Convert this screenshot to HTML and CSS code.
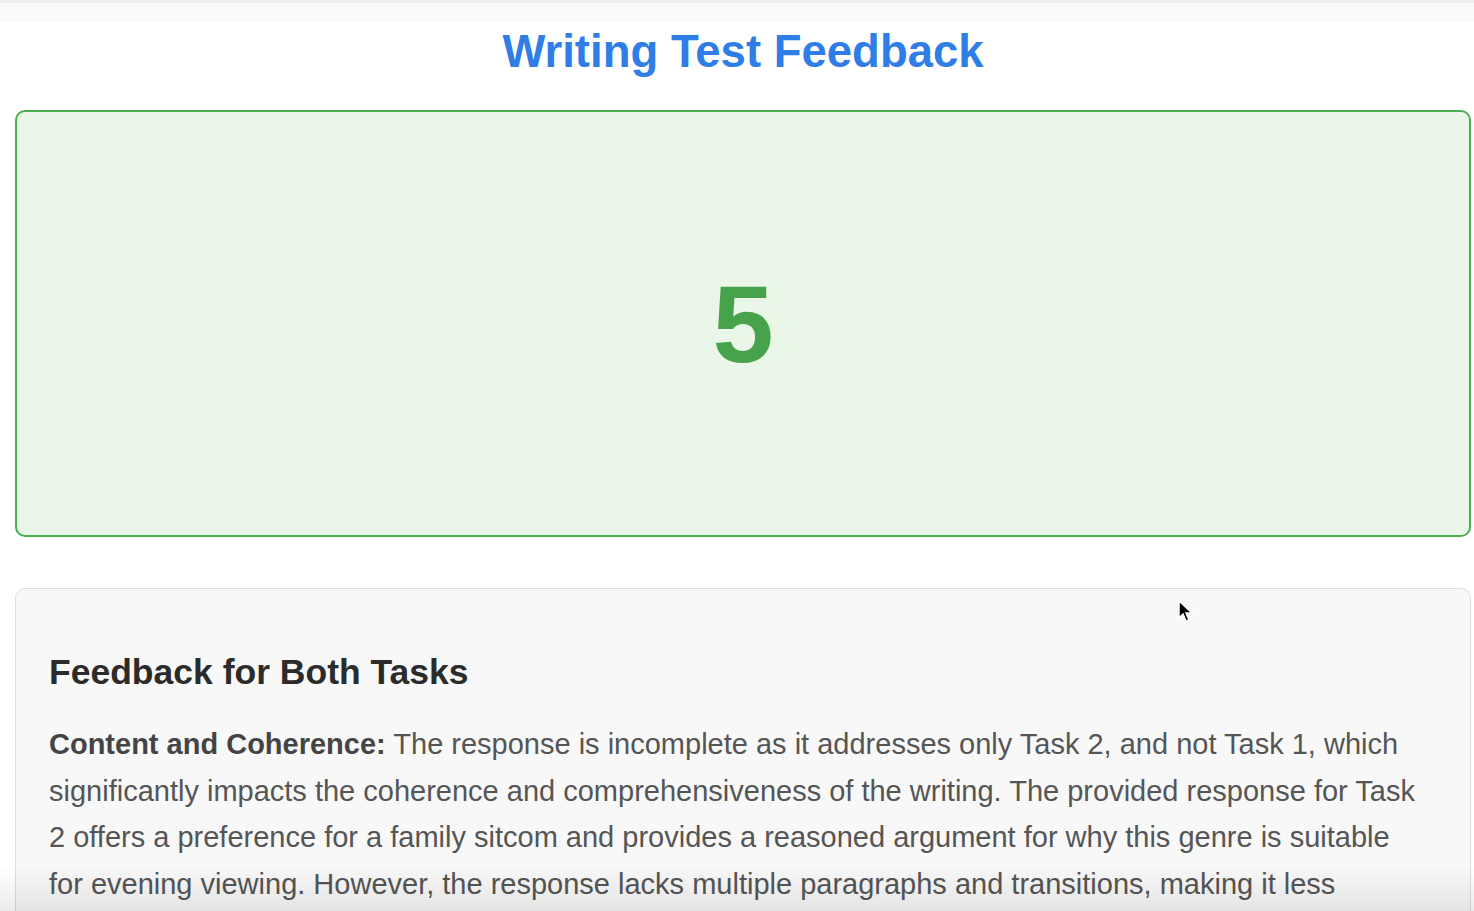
FILE: index.html
```html
<!DOCTYPE html>
<html lang="en">
<head>
    <meta charset="UTF-8">
    <meta name="viewport" content="width=device-width, initial-scale=1.0">
    <title>Writing Test Feedback</title>
    <link rel="stylesheet" href="styles.css">
</head>
<body>
    <div class="topbar"></div>
    <div class="container">
        <h1>Writing Test Feedback</h1>

        <div class="score-box">
            <span class="score">5</span>
        </div>

        <div class="feedback-box">
            <h2>Feedback for Both Tasks</h2>
            <p><strong>Content and Coherence:</strong> The response is incomplete as it addresses only Task 2, and not Task 1, which significantly impacts the coherence and comprehensiveness of the writing. The provided response for Task 2 offers a preference for a family sitcom and provides a reasoned argument for why this genre is suitable for evening viewing. However, the response lacks multiple paragraphs and transitions, making it less cohesive and harder to follow than it should be.</p>
        </div>
    </div>

    <svg class="cursor" width="16" height="24" viewBox="0 0 16 24">
        <path d="M1 1 L1 18 L5 14 L8 21 L11 20 L8 13 L14 13 Z" fill="#000" stroke="#fff" stroke-width="1.5"/>
    </svg>
    <div class="bottom-fade"></div>
</body>
</html>
```

FILE: styles.css
```css
body {
    margin: 0;
    font-family: "Liberation Sans", Arial, sans-serif;
    background-color: #fff;
    color: #333;
    overflow: hidden;
}
.topbar {
    height: 3px;
    background-color: #eceef2;
    border-bottom: 19px solid #fafafb;
}
.container {
    margin-left: 15px;
    width: 1456px;
}
h1 {
    text-align: center;
    color: #2f7de6;
    font-size: 45.5px;
    margin: 4px 0 32px;
}
.score-box {
    height: 423px;
    border: 2px solid #4caf50;
    border-radius: 10px;
    background-color: #e9f6e8;
    display: flex;
    align-items: center;
    justify-content: center;
}
.score {
    font-size: 110px;
    font-weight: bold;
    color: #47a34b;
}
.feedback-box {
    margin-top: 51px;
    border: 1px solid #ddd;
    border-radius: 10px;
    background-color: #f8f8f8;
    padding: 44px 46px 40px 33px;
}
.feedback-box h2 {
    margin: 19px 0 28px;
    font-size: 35.5px;
    color: #2b2b2b;
}
.feedback-box p {
    margin: 0;
    font-size: 29px;
    line-height: 1.61;
    color: #555;
}
.feedback-box strong {
    color: #444;
}
.cursor {
    position: absolute;
    left: 1178px;
    top: 600px;
}
.bottom-fade {
    position: fixed;
    left: 0;
    right: 0;
    bottom: 0;
    height: 45px;
    background: linear-gradient(to bottom, rgba(0,0,0,0), rgba(0,0,0,0.08));
}
```
